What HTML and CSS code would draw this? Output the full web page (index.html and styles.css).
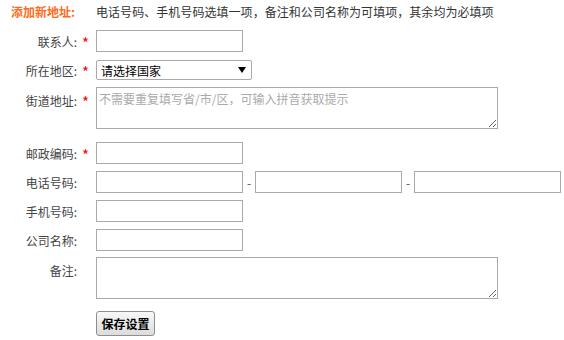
FILE: index.html
```html
<!DOCTYPE html>
<html lang="zh-CN">
<head>
  <meta charset="UTF-8">
  <title>添加新地址</title>
  <link rel="stylesheet" href="styles.css">
</head>
<body>
  <form class="address-form">
    <div class="row head">
      <span class="head-title">添加新地址:</span>
      <span class="head-tip">电话号码、手机号码选填一项，备注和公司名称为可填项，其余均为必填项</span>
    </div>

    <div class="row r-contact">
      <label class="lbl">联系人:</label><span class="req">*</span>
      <input type="text" class="txt">
    </div>

    <div class="row r-region">
      <label class="lbl">所在地区:</label><span class="req">*</span>
      <span class="sel-wrap">
        <select class="sel"><option>请选择国家</option></select>
        <svg class="sel-arrow" width="8" height="6" viewBox="0 0 8 6"><path d="M0 0H8L4 6Z" fill="#000"/></svg>
      </span>
    </div>

    <div class="row top r-street">
      <label class="lbl">街道地址:</label><span class="req">*</span>
      <textarea class="area" placeholder="不需要重复填写省/市/区，可输入拼音获取提示"></textarea>
    </div>

    <div class="row r-zip">
      <label class="lbl">邮政编码:</label><span class="req">*</span>
      <input type="text" class="txt">
    </div>

    <div class="row r-phone">
      <label class="lbl">电话号码:</label><span class="req"></span>
      <input type="text" class="txt"><span class="dash">-</span><input type="text" class="txt"><span class="dash">-</span><input type="text" class="txt">
    </div>

    <div class="row r-mobile">
      <label class="lbl">手机号码:</label><span class="req"></span>
      <input type="text" class="txt">
    </div>

    <div class="row r-company">
      <label class="lbl">公司名称:</label><span class="req"></span>
      <input type="text" class="txt">
    </div>

    <div class="row top r-note">
      <label class="lbl">备注:</label><span class="req"></span>
      <textarea class="area"></textarea>
    </div>

    <div class="row r-submit">
      <span class="lbl"></span><span class="req"></span>
      <button type="button" class="save">保存设置</button>
    </div>
  </form>
</body>
</html>
```

FILE: styles.css
```css
* {
  box-sizing: border-box;
}
body {
  margin: 0;
  background: #fff;
  font-family: "Noto Sans CJK SC", "Liberation Sans", sans-serif;
  font-size: 12px;
  color: #333;
}
.row {
  display: flex;
  align-items: center;
}
.row.top {
  align-items: flex-start;
}
.row.top .lbl {
  padding-top: 5px;
}
.row.top .req {
  padding-top: 7px;
}
.head {
  height: 22px;
  margin-bottom: 8px;
}
.head-title {
  width: 96px;
  padding-left: 11px;
  color: #ff6a1a;
  font-weight: bold;
}
.head-tip {
  color: #333;
  letter-spacing: 0.05px;
}
.lbl {
  width: 78px;
  padding-right: 1px;
  text-align: right;
  color: #444;
}
.req {
  width: 18px;
  padding-left: 4px;
  padding-top: 4px;
  color: #f00;
  font-size: 15px;
  line-height: 16px;
}
.txt {
  width: 147px;
  height: 22px;
  margin: 0;
  border: 1px solid #a9a9a9;
  background: #fff;
  font: inherit;
}
.dash {
  width: 12px;
  text-align: center;
  color: #555;
}
.sel-wrap {
  position: relative;
  display: inline-block;
  height: 20px;
}
.sel {
  width: 156px;
  height: 20px;
  margin: 0;
  padding: 0 14px 0 4px;
  border: 1px solid #a9a9a9;
  border-radius: 2px;
  background: #fff;
  font: inherit;
  color: #000;
  appearance: none;
  -webkit-appearance: none;
}
.sel-arrow {
  position: absolute;
  right: 6px;
  top: 7px;
  pointer-events: none;
}
.area {
  width: 402px;
  height: 42px;
  margin: 0;
  padding: 2px;
  border: 1px solid #a9a9a9;
  font: inherit;
  resize: both;
}
.area::placeholder {
  color: #aaa;
}
.r-contact { margin-bottom: 8px; }
.r-region { margin-bottom: 7px; }
.r-street { margin-bottom: 13px; }
.r-zip { margin-bottom: 7px; }
.r-phone { margin-bottom: 7px; }
.r-mobile { margin-bottom: 7px; }
.r-company { margin-bottom: 6px; }
.r-note { margin-bottom: 12px; }
.r-note .lbl {
  padding-top: 7px;
}
.save {
  width: 59px;
  height: 25px;
  padding: 0;
  border: 1px solid #8e8e8e;
  border-radius: 3px;
  background: linear-gradient(#f8f8f8, #dcdcdc);
  font: inherit;
  font-weight: bold;
  color: #000;
}
```
